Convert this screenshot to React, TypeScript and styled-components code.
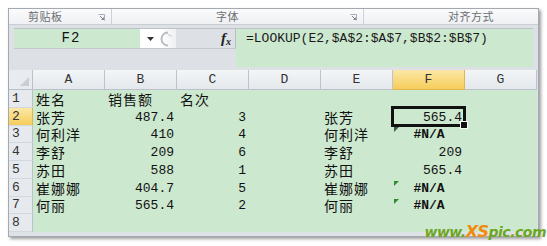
import React from "react";
import styled, { createGlobalStyle, css } from "styled-components";

const Global = createGlobalStyle`
  html, body { margin: 0; padding: 0; background: #ffffff; }
  * { box-sizing: border-box; }
`;

const Page = styled.div`
  position: relative;
  width: 547px;
  height: 246px;
  padding: 8px 0 0 8px;
  overflow: hidden;
`;

const Window = styled.div`
  width: 531px;
  height: 229px;
  border: 1px solid #a3a9b0;
  box-shadow: 2px 2px 3px rgba(0, 0, 0, 0.38);
  background: #dfe3e8;
  display: flex;
  flex-direction: column;
  overflow: hidden;
`;

const Ribbon = styled.div`
  height: 16px;
  display: flex;
  background: linear-gradient(#fbfbfc, #eef0f3);
  border-bottom: 1px solid #c9ced4;
`;

const Group = styled.div<{ $w?: number; $offset: number }>`
  position: relative;
  ${(p) => (p.$w ? css`width: ${p.$w}px;` : css`flex: 1;`)}
  padding-left: ${(p) => p.$offset}px;
  border-right: ${(p) => (p.$w ? "1px solid #cdd1d6" : "none")};
  font: 11px/15px "Noto Sans CJK SC", sans-serif;
  color: #6b6e72;
  letter-spacing: 0.5px;
`;

const Launcher = styled.svg`
  position: absolute;
  right: 6px;
  top: 5px;
`;

const FormulaBar = styled.div`
  height: 45px;
  padding: 3px 5px 3px 5px;
  display: flex;
  background: #dde1e6;
`;

const LeftPane = styled.div`
  width: 222px;
  display: flex;
  flex-direction: column;
  border-top: 1px solid #bcc2c9;
`;

const NameRow = styled.div`
  height: 20px;
  display: flex;
  border-bottom: 1px solid #c4c9cf;
`;

const NameBox = styled.div`
  width: 126px;
  background: #cce8cf;
  padding-right: 12px;
  text-align: center;
  font: 14px/19px "Liberation Mono", monospace;
  letter-spacing: 1px;
  color: #111;
`;

const DropZone = styled.div`
  width: 36px;
  background: linear-gradient(90deg, #ffffff 60%, #eef0f2);
  display: flex;
  align-items: center;
  padding-left: 7px;
  gap: 5px;
`;

const FxZone = styled.div`
  flex: 1;
  display: flex;
  justify-content: flex-end;
  align-items: center;
  padding-right: 4px;
  border-right: 1px solid #b7bdc4;
  font-family: "Liberation Serif", serif;
  font-style: italic;
  font-weight: bold;
  color: #222;
`;

const FxF = styled.span`
  font-size: 15px;
`;

const FxX = styled.span`
  font-size: 10px;
  margin-top: 5px;
`;

const FormulaInput = styled.div`
  flex: 1;
  background: #cce8cf;
  border-top: 1px solid #bcc2c9;
  padding-left: 10px;
  font: 13px/19px "Liberation Mono", monospace;
  color: #1a1a1a;
`;

const Sheet = styled.div`
  display: grid;
  grid-template-columns: 24px repeat(7, 72px);
  grid-template-rows: 20px repeat(8, 17.75px);
  background: #cce8cf;
  margin-right: 1px;
`;

const Corner = styled.div`
  position: relative;
  background: #e8ebef;
  border-right: 1px solid #bac1ca;
  border-bottom: 1px solid #bac1ca;
  &::after {
    content: "";
    position: absolute;
    right: 3px;
    bottom: 3px;
    border-left: 9px solid transparent;
    border-bottom: 9px solid #c9ced5;
  }
`;

const activeBg = css`
  background: linear-gradient(#fbe7a6, #f6cd5a);
  border-right-color: #e0b64e;
`;

const ColHead = styled.div<{ $active?: boolean }>`
  background: linear-gradient(#f3f5f7, #e4e8ec);
  border-right: 1px solid #bcc3cc;
  border-bottom: 1px solid #bac1ca;
  text-align: center;
  font: 13px/19px "Liberation Mono", monospace;
  color: #333;
  ${(p) => p.$active && activeBg}
  ${(p) => p.$active && css`border-bottom-color: #e0b64e;`}
`;

const RowHead = styled.div<{ $active?: boolean }>`
  background: #e6e9ed;
  border-right: 1px solid #bac1ca;
  border-bottom: 1px solid #d3d8de;
  padding-left: 3px;
  display: flex;
  align-items: flex-end;
  font: 13px/16px "Liberation Mono", monospace;
  color: #333;
  ${(p) => p.$active && activeBg}
`;

const Cell = styled.div<{
  $align: "left" | "right" | "center";
  $cjk?: boolean;
  $bold?: boolean;
  $selected?: boolean;
  $flag?: "green" | "dark";
}>`
  position: relative;
  display: flex;
  align-items: flex-end;
  justify-content: ${(p) =>
    p.$align === "left" ? "flex-start" : p.$align === "right" ? "flex-end" : "center"};
  padding: 0 3px 0 3px;
  white-space: nowrap;
  color: #111;
  ${(p) =>
    p.$cjk
      ? css`
          font: 14px/14px "Noto Sans CJK SC", sans-serif;
          letter-spacing: 1px;
          padding-bottom: 2px;
        `
      : css`
          font: ${p.$bold ? "bold " : ""}13px/15px "Liberation Mono", monospace;
          padding-bottom: 1px;
        `}
  ${(p) =>
    p.$selected &&
    css`
      &::after {
        content: "";
        position: absolute;
        left: -2px;
        top: -2px;
        right: -1px;
        bottom: -1px;
        border: 3px solid #111;
      }
      &::before {
        content: "";
        position: absolute;
        right: -3px;
        bottom: -3px;
        width: 6px;
        height: 6px;
        background: #111;
        border: 1px solid #fff;
        z-index: 2;
      }
    `}
  ${(p) =>
    p.$flag &&
    css`
      &::before {
        content: "";
        position: absolute;
        left: 1px;
        top: ${p.$flag === "dark" ? 1 : 2}px;
        border-top: 5px solid ${p.$flag === "dark" ? "#3b5a3f" : "#2f8a2f"};
        border-right: 5px solid transparent;
      }
    `}
`;

const Watermark = styled.div`
  position: absolute;
  right: 1px;
  bottom: 7px;
  font: italic bold 14px/14px "DejaVu Sans", sans-serif;
  letter-spacing: -0.5px;
  color: #6da61f;
`;

const Orange = styled.span`
  color: #f28a0c;
  font-size: 16px;
`;

type CellDef = {
  text: string;
  align: "left" | "right" | "center";
  cjk?: boolean;
  bold?: boolean;
  selected?: boolean;
  flag?: "green" | "dark";
};

const L = (t: string): CellDef => ({ text: t, align: "left", cjk: true });
const R = (t: string): CellDef => ({ text: t, align: "right" });
const NA = (flag?: "green" | "dark"): CellDef => ({ text: "#N/A", align: "center", bold: true, flag });
const E: CellDef = { text: "", align: "left" };

const data: CellDef[][] = [
  [L("姓名"), L("销售额"), L("名次"), E, E, E, E],
  [L("张芳"), R("487.4"), R("3"), E, L("张芳"), { ...R("565.4"), selected: true }, E],
  [L("何利洋"), R("410"), R("4"), E, L("何利洋"), NA("dark"), E],
  [L("李舒"), R("209"), R("6"), E, L("李舒"), R("209"), E],
  [L("苏田"), R("588"), R("1"), E, L("苏田"), R("565.4"), E],
  [L("崔娜娜"), R("404.7"), R("5"), E, L("崔娜娜"), NA("green"), E],
  [L("何丽"), R("565.4"), R("2"), E, L("何丽"), NA("green"), E],
  [E, E, E, E, E, E, E],
];

const cols = ["A", "B", "C", "D", "E", "F", "G"];

const LauncherIcon = () => (
  <Launcher width="7" height="7" viewBox="0 0 7 7">
    <path d="M0.5 0.5 H6.5 V6.5" fill="none" stroke="#a8adb3" strokeWidth="1" />
    <path d="M2 2 L5.5 5.5 M3.5 5.5 H5.5 V3.5" fill="none" stroke="#7d8288" strokeWidth="1" />
  </Launcher>
);

export default function App() {
  return (
    <Page>
      <Global />
      <Window>
        <Ribbon>
          <Group $w={103} $offset={19}>
            剪贴板
            <LauncherIcon />
          </Group>
          <Group $w={252} $offset={104}>
            字体
            <LauncherIcon />
          </Group>
          <Group $offset={84}>对齐方式</Group>
        </Ribbon>
        <FormulaBar>
          <LeftPane>
            <NameRow>
              <NameBox>F2</NameBox>
              <DropZone>
                <svg width="7" height="4" viewBox="0 0 7 4">
                  <path d="M0 0 H7 L3.5 4 Z" fill="#333" />
                </svg>
                <svg width="14" height="16" viewBox="0 0 14 16">
                  <path d="M9 1.5 A6.5 6.5 0 0 0 9 14.5" fill="none" stroke="#b9bdc2" strokeWidth="2" />
                  <path d="M9 4 A2 2 0 0 1 12 6" fill="none" stroke="#d5d8dc" strokeWidth="1.5" />
                </svg>
              </DropZone>
              <FxZone>
                <FxF>f</FxF>
                <FxX>x</FxX>
              </FxZone>
            </NameRow>
          </LeftPane>
          <FormulaInput>=LOOKUP(E2,$A$2:$A$7,$B$2:$B$7)</FormulaInput>
        </FormulaBar>
        <Sheet>
          <Corner />
          {cols.map((c) => (
            <ColHead key={c} $active={c === "F"}>
              {c}
            </ColHead>
          ))}
          {data.map((row, ri) => (
            <React.Fragment key={ri}>
              <RowHead $active={ri === 1}>{ri + 1}</RowHead>
              {row.map((cell, ci) => (
                <Cell
                  key={ci}
                  $align={cell.align}
                  $cjk={cell.cjk}
                  $bold={cell.bold}
                  $selected={cell.selected}
                  $flag={cell.flag}
                >
                  {cell.text}
                </Cell>
              ))}
            </React.Fragment>
          ))}
        </Sheet>
      </Window>
      <Watermark>
        www.<Orange>XS</Orange>pic.com
      </Watermark>
    </Page>
  );
}
